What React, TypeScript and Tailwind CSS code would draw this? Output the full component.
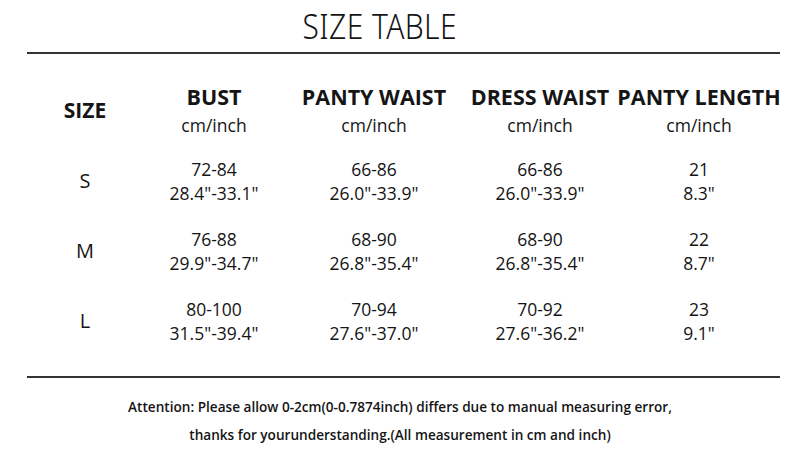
const columns = [
  { title: 'BUST', width: 'w-[160px]' },
  { title: 'PANTY WAIST', width: 'w-[160px]' },
  { title: 'DRESS WAIST', width: 'w-[172px]' },
  { title: 'PANTY LENGTH', width: 'w-[146px]' },
]

const rows = [
  {
    size: 'S',
    values: [
      ['72-84', '28.4"-33.1"'],
      ['66-86', '26.0"-33.9"'],
      ['66-86', '26.0"-33.9"'],
      ['21', '8.3"'],
    ],
  },
  {
    size: 'M',
    values: [
      ['76-88', '29.9"-34.7"'],
      ['68-90', '26.8"-35.4"'],
      ['68-90', '26.8"-35.4"'],
      ['22', '8.7"'],
    ],
  },
  {
    size: 'L',
    values: [
      ['80-100', '31.5"-39.4"'],
      ['70-94', '27.6"-37.0"'],
      ['70-92', '27.6"-36.2"'],
      ['23', '9.1"'],
    ],
  },
]

const body = { fontFamily: '"Open Sans", "Noto Sans", sans-serif' }

export default function App() {
  return (
    <div className="w-[800px] h-[460px] bg-white text-[#151515] flex flex-col" style={body}>
      {/* Title */}
      <div className="h-[52px] flex items-center justify-center pr-[40px]">
        <h1
          className="text-[34px] font-light tracking-[0.5px] scale-x-[0.88] leading-none"
          style={{ fontFamily: '"Noto Sans", sans-serif' }}
        >
          SIZE TABLE
        </h1>
      </div>
      <div className="ml-[27px] mr-[20px] h-[2px] bg-[#333]" />

      {/* Table */}
      <div className="flex-1 flex flex-col pl-[36px] pt-[26px]">
        <div className="flex items-center h-[62px]">
          <div className="w-[98px] text-center text-[21px] font-bold">SIZE</div>
          {columns.map((c) => (
            <div key={c.title} className={`${c.width} flex flex-col items-center`}>
              <div className="text-[21.5px] font-bold leading-[28px] whitespace-nowrap">{c.title}</div>
              <div className="text-[17.5px] leading-[28px]">cm/inch</div>
            </div>
          ))}
        </div>

        <div className="flex flex-col pt-[4px]">
          {rows.map((r) => (
            <div key={r.size} className="flex items-center h-[70px]">
              <div className="w-[98px] text-center text-[20px]">{r.size}</div>
              {r.values.map((v, i) => (
                <div key={i} className={`${columns[i].width} flex flex-col items-center text-[17.5px] leading-[24px] whitespace-nowrap`}>
                  <div>{v[0]}</div>
                  <div>{v[1]}</div>
                </div>
              ))}
            </div>
          ))}
        </div>
      </div>

      <div className="ml-[27px] mr-[20px] h-[2px] bg-[#333]" />

      {/* Footnote */}
      <div className="h-[82px] flex flex-col items-center justify-center gap-[8px] text-[13.6px] font-semibold pt-[4px]">
        <p>Attention: Please allow 0-2cm(0-0.7874inch) differs due to manual measuring error,</p>
        <p>thanks for yourunderstanding.(All measurement in cm and inch)</p>
      </div>
    </div>
  )
}
